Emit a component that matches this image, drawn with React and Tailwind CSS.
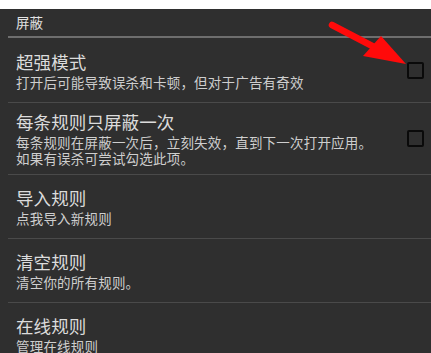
import React from "react";

const font = { fontFamily: '"Noto Sans CJK SC", "Noto Sans", sans-serif' };

function Checkbox() {
  return <div className="w-[17px] h-[17px] border-2 border-[#0a0a0a] rounded-[2px] shrink-0" />;
}

function Item({ title, lines, checkbox, first }) {
  return (
    <div>
      <div className={`ml-2 h-px ${first ? "bg-transparent" : "bg-[#4a4a4a]"}`} />
      <div className="min-h-[63px] flex items-center pl-4 pr-[7px]">
        <div className="flex-1 flex flex-col justify-center py-2">
          <div className="text-[17.5px] leading-[22px] text-[#dcdcdc] tracking-[0.1px]">{title}</div>
          <div className="text-[13.5px] leading-[15.5px] text-[#cecece] mt-[2px] tracking-[0.2px]">
            {lines.map((l, i) => (
              <div key={i}>{l}</div>
            ))}
          </div>
        </div>
        {checkbox && <Checkbox />}
      </div>
    </div>
  );
}

export default function App() {
  return (
    <div className="w-[431px] h-[353px] overflow-hidden bg-white relative" style={font}>
      <div className="h-[9px] bg-white" />
      <div className="bg-[#2f2f2f] h-[344px]">
        <div className="h-[27px] flex items-center pl-4 text-[13.5px] text-[#e2e2e2]">屏蔽</div>
        <div className="ml-2 h-[2px] bg-[#6e6e6e]" />
        <Item first title="超强模式" lines={["打开后可能导致误杀和卡顿，但对于广告有奇效"]} checkbox />
        <Item
          title="每条规则只屏蔽一次"
          lines={["每条规则在屏蔽一次后，立刻失效，直到下一次打开应用。", "如果有误杀可尝试勾选此项。"]}
          checkbox
        />
        <Item title="导入规则" lines={["点我导入新规则"]} />
        <Item title="清空规则" lines={["清空你的所有规则。"]} />
        <Item title="在线规则" lines={["管理在线规则"]} />
      </div>
      <svg className="absolute left-0 top-0 pointer-events-none" width="431" height="353">
        <line x1="332" y1="25" x2="378" y2="49" stroke="#ff0a0a" strokeWidth="6.5" strokeLinecap="round" />
        <polygon points="381,36 406,64 363,56" fill="#ff0a0a" />
      </svg>
    </div>
  );
}
